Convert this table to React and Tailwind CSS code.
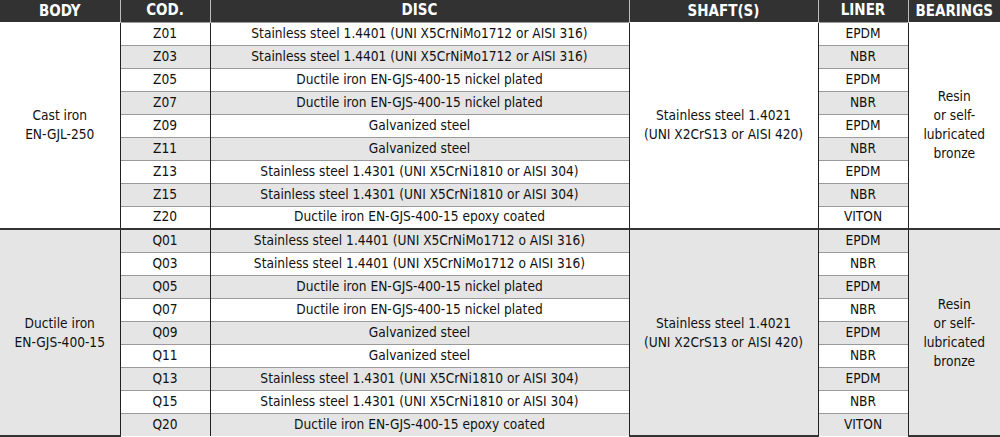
const groups = [
  {
    body: ["Cast iron", "EN-GJL-250"],
    rows: [
      ["Z01", "Stainless steel 1.4401 (UNI X5CrNiMo1712 or AISI 316)", "EPDM"],
      ["Z03", "Stainless steel 1.4401 (UNI X5CrNiMo1712 or AISI 316)", "NBR"],
      ["Z05", "Ductile iron EN-GJS-400-15 nickel plated", "EPDM"],
      ["Z07", "Ductile iron EN-GJS-400-15 nickel plated", "NBR"],
      ["Z09", "Galvanized steel", "EPDM"],
      ["Z11", "Galvanized steel", "NBR"],
      ["Z13", "Stainless steel 1.4301 (UNI X5CrNi1810 or AISI 304)", "EPDM"],
      ["Z15", "Stainless steel 1.4301 (UNI X5CrNi1810 or AISI 304)", "NBR"],
      ["Z20", "Ductile iron EN-GJS-400-15 epoxy coated", "VITON"],
    ],
  },
  {
    body: ["Ductile iron", "EN-GJS-400-15"],
    rows: [
      ["Q01", "Stainless steel 1.4401 (UNI X5CrNiMo1712 o AISI 316)", "EPDM"],
      ["Q03", "Stainless steel 1.4401 (UNI X5CrNiMo1712 o AISI 316)", "NBR"],
      ["Q05", "Ductile iron EN-GJS-400-15 nickel plated", "EPDM"],
      ["Q07", "Ductile iron EN-GJS-400-15 nickel plated", "NBR"],
      ["Q09", "Galvanized steel", "EPDM"],
      ["Q11", "Galvanized steel", "NBR"],
      ["Q13", "Stainless steel 1.4301 (UNI X5CrNi1810 or AISI 304)", "EPDM"],
      ["Q15", "Stainless steel 1.4301 (UNI X5CrNi1810 or AISI 304)", "NBR"],
      ["Q20", "Ductile iron EN-GJS-400-15 epoxy coated", "VITON"],
    ],
  },
];

const headers = ["BODY", "COD.", "DISC", "SHAFT(S)", "LINER", "BEARINGS"];

export default function App() {
  return (
    <div
      className="w-[1000px] h-[437px] bg-white text-[#111] overflow-hidden"
      style={{ fontFamily: '"DejaVu Sans Condensed", "DejaVu Sans", sans-serif' }}
    >
      <table className="w-full border-collapse table-fixed text-[13.6px] text-center">
        <colgroup>
          <col className="w-[120px]" />
          <col className="w-[90px]" />
          <col className="w-[419px]" />
          <col className="w-[189px]" />
          <col className="w-[90px]" />
          <col className="w-[92px]" />
        </colgroup>
        <thead>
          <tr className="h-[22px] bg-[#323232] text-white font-bold text-[15px]">
            {headers.map((h, i) => (
              <th key={h} className={`p-0 leading-none ${i > 0 ? "border-l border-[#bdbdbd]" : ""}`}>
                {h}
              </th>
            ))}
          </tr>
        </thead>
        <tbody>
          {groups.map((g, gi) => {
            const groupBg = gi === 0 ? "bg-white" : "bg-[#e5e5e5]";
            const groupLine = gi > 0 ? "border-t-2 border-t-[#333] border-b-2 border-b-[#333]" : "";
            return g.rows.map((r, ri) => {
              const idx = gi * 9 + ri;
              const stripe = idx % 2 === 0 ? "bg-white" : "bg-[#e5e5e5]";
              const topLine = ri === 0 && gi > 0 ? "border-t-2 border-t-[#333]" : "border-t border-t-[#9a9a9a]";
              return (
                <tr key={r[0]} className="h-[23px] leading-none">
                  {ri === 0 && (
                    <td rowSpan={9} className={`${groupBg} border-r border-r-[#222] ${groupLine} leading-[19px]`}>
                      {g.body[0]}
                      <br />
                      {g.body[1]}
                    </td>
                  )}
                  <td className={`${stripe} ${topLine} border-r border-r-[#222] p-0`}>{r[0]}</td>
                  <td className={`${stripe} ${topLine} border-r border-r-[#222] p-0`}>{r[1]}</td>
                  {ri === 0 && (
                    <td rowSpan={9} className={`${groupBg} border-r border-r-[#222] ${groupLine} leading-[19px]`}>
                      Stainless steel 1.4021
                      <br />
                      (UNI X2CrS13 or AISI 420)
                    </td>
                  )}
                  <td className={`${stripe} ${topLine} border-r border-r-[#222] p-0`}>{r[2]}</td>
                  {ri === 0 && (
                    <td rowSpan={9} className={`${groupBg} ${groupLine} leading-[19px]`}>
                      Resin
                      <br />
                      or self-
                      <br />
                      lubricated
                      <br />
                      bronze
                    </td>
                  )}
                </tr>
              );
            });
          })}
        </tbody>
      </table>
    </div>
  );
}
